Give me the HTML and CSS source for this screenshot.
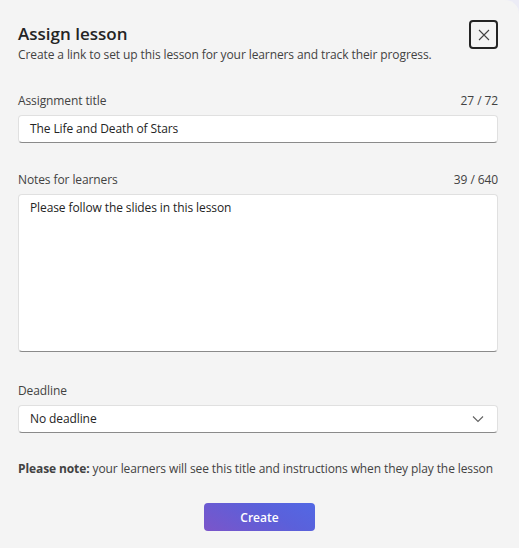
FILE: index.html
```html
<!DOCTYPE html>
<html>
<head>
<meta charset="utf-8">
<link rel="stylesheet" href="styles.css">
</head>
<body>
<div class="dialog">
  <header class="head">
    <div class="titles">
      <h1 class="title">Assign lesson</h1>
      <p class="subtitle">Create a link to set up this lesson for your learners and track their progress.</p>
    </div>
    <button class="close" aria-label="Close">
      <svg width="12" height="12" viewBox="0 0 12 12"><path d="M1 1 L11 11 M11 1 L1 11" stroke="#424242" stroke-width="1.1" fill="none"/></svg>
    </button>
  </header>

  <div class="field field-title">
    <div class="label-row"><span class="label">Assignment title</span><span class="count">27 / 72</span></div>
    <div class="input">The Life and Death of Stars</div>
  </div>

  <div class="field field-notes">
    <div class="label-row"><span class="label">Notes for learners</span><span class="count">39 / 640</span></div>
    <div class="input textarea">Please follow the slides in this lesson</div>
  </div>

  <div class="field field-deadline">
    <div class="label-row"><span class="label">Deadline</span></div>
    <div class="input select"><span>No deadline</span>
      <svg width="12" height="8" viewBox="0 0 12 8"><path d="M1 1.5 L6 6.5 L11 1.5" stroke="#616161" stroke-width="1.1" fill="none"/></svg>
    </div>
  </div>

  <p class="note"><b>Please note:</b> your learners will see this title and instructions when they play the lesson</p>

  <div class="actions"><button class="create">Create</button></div>
</div>
</body>
</html>
```

FILE: styles.css
```css
html, body { margin: 0; padding: 0; }
body {
  width: 519px;
  height: 548px;
  background: #ececf6;
  font-family: "Open Sans", "Noto Sans", sans-serif;
  letter-spacing: -0.1px;
  color: #242424;
  overflow: hidden;
}
.dialog {
  box-sizing: border-box;
  width: 519px;
  height: 548px;
  background: #f4f4f4;
  border-radius: 0 14px 0 0;
  padding: 20px 21px 0 18px;
}
.head {
  display: flex;
  justify-content: space-between;
  align-items: flex-start;
}
.title {
  margin: 2px 0 0;
  font-size: 17px;
  font-weight: 600;
  line-height: 24px;
  letter-spacing: 0;
  color: #242424;
}
.subtitle {
  margin: 0;
  font-size: 12px;
  line-height: 18px;
  color: #424242;
}
.close {
  width: 29px;
  height: 29px;
  box-sizing: border-box;
  border: 2px solid #242424;
  border-radius: 4px;
  background: transparent;
  display: flex;
  align-items: center;
  justify-content: center;
  padding: 0;
}
.field-title { margin-top: 28px; }
.field-notes { margin-top: 28px; }
.field-deadline { margin-top: 30px; }
.label-row {
  display: flex;
  justify-content: space-between;
  font-size: 12px;
  line-height: 18px;
  color: #424242;
  margin-bottom: 5px;
}
.count { color: #424242; }
.input {
  box-sizing: border-box;
  height: 28px;
  background: #fff;
  border: 1px solid #e0e0e0;
  border-bottom: 1px solid #8a8a8a;
  border-radius: 4px;
  padding: 0 11px;
  font-size: 12px;
  line-height: 26px;
  color: #242424;
}
.textarea {
  height: 158px;
  padding-top: 3px;
  line-height: 20px;
}
.select {
  display: flex;
  align-items: center;
  justify-content: space-between;
  padding-right: 13px;
}
.note {
  margin: 27px 0 0;
  font-size: 12px;
  line-height: 18px;
  white-space: nowrap;
  color: #424242;
}
.note b { font-weight: 700; color: #424242; }
.actions {
  display: flex;
  justify-content: center;
  margin-top: 25px;
  padding-left: 3px;
}
.create {
  width: 111px;
  height: 28px;
  border: none;
  border-radius: 4px;
  background: linear-gradient(30deg, #7b55c9 0%, #5b60da 60%, #5268e4 100%);
  color: #fff;
  font-family: inherit;
  font-size: 12px;
  font-weight: 600;
}
```
